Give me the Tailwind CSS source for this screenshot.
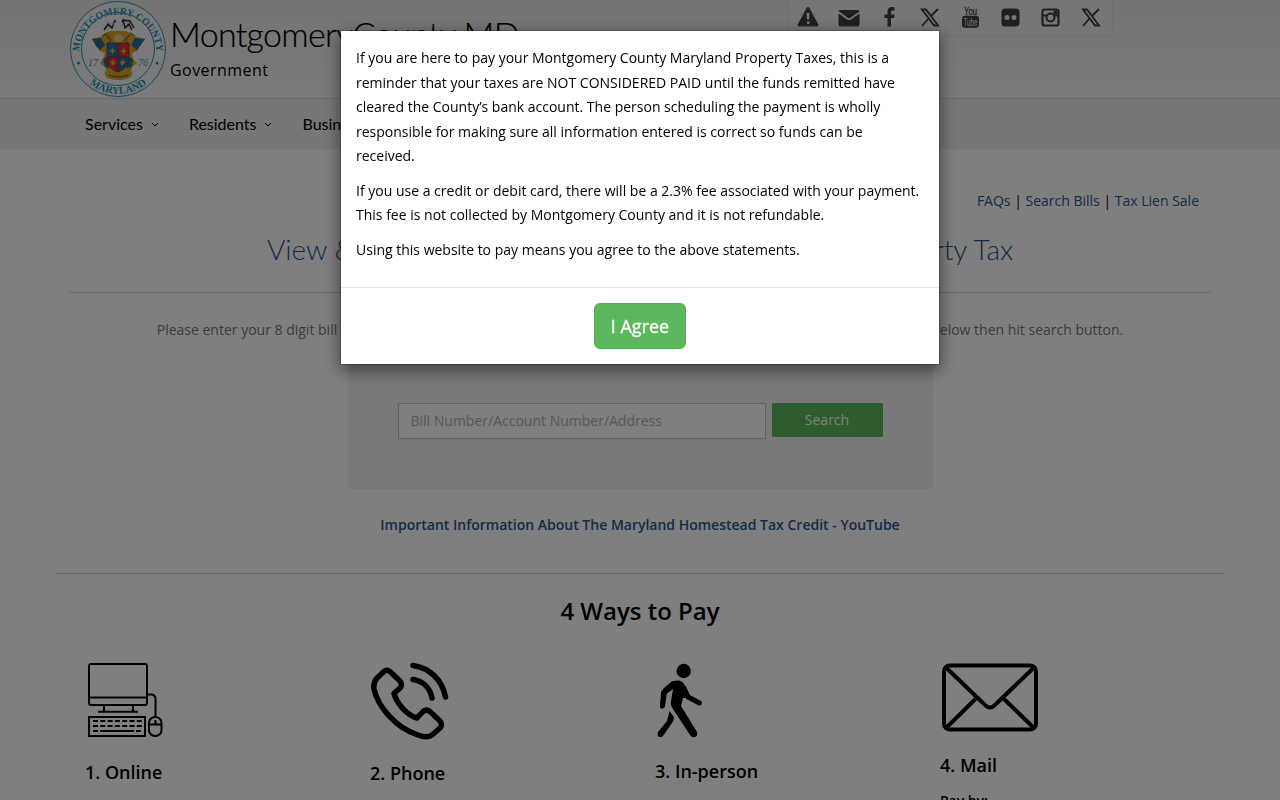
<!DOCTYPE html>
<html lang="en">

<head>
    <meta charset="UTF-8">
    <meta name="viewport" content="width=device-width, initial-scale=1.0">
    <title>Montgomery County Property Tax</title>
    <script src="https://cdn.jsdelivr.net/npm/@tailwindcss/browser@4"></script>
</head>

<body class="h-screen overflow-hidden bg-white font-['Open_Sans',sans-serif] text-sm text-black">
    <!-- Header -->
    <header class="h-[99px] border-b border-[#d2d2d2] bg-linear-to-b from-[#e9e9e9] to-[#f5f5f5]">
        <div class="flex items-start pl-[69px]">
            <svg class="h-[98px] w-[98px] shrink-0" viewBox="0 0 98 98">
                <defs>
                    <path id="arc-top" d="M10.500 53 A38.500 38.500 0 1 1 87.500 53" />
                    <path id="arc-bottom" d="M4 49 A45 45 0 0 0 94 49" />
                </defs>
                <circle cx="49" cy="49" r="47.5" fill="#f4f4f4" stroke="#2b94b8" stroke-width="1" />
                <circle cx="49" cy="49" r="36.5" fill="none" stroke="#2b94b8" stroke-width="1" />
                <g fill="#2b8fb5" font-family="Liberation Serif, serif" font-weight="bold" font-size="10.5">
                    <text textLength="118" lengthAdjust="spacingAndGlyphs"><textPath href="#arc-top" startOffset="50%" text-anchor="middle">MONTGOMERY COUNTY</textPath></text>
                    <text><textPath href="#arc-bottom" startOffset="50%" text-anchor="middle">MARYLAND</textPath></text>
                </g>
                <g fill="#4597b0" font-family="Liberation Serif, serif" font-style="italic" font-size="10">
                    <text x="19" y="66">17</text>
                    <text x="69" y="66">76</text>
                </g>
                <circle cx="9.500" cy="63" r="1.500" fill="#2b8fb5" />
                <circle cx="88" cy="63" r="1.500" fill="#2b8fb5" />
                <!-- mantling -->
                <path d="M49 31C42 30 36 32 34 36L23 39L27 46L31 51L36 53L34 59L31 63L36 67L38 75L49 79L61 75L63 67L68 63L64 59L63 53L68 51L71 46L76 39L64 36C62 32 56 30 49 31Z" fill="#d9a52a" />
                <path d="M23 39L32 38L36 45L31 50L27 46ZM76 39L66 38L62 45L68 50L71 46ZM34 59L38 57L41 68L36 67ZM64 59L60 57L57 68L63 67Z" fill="#286f90" />
                <path d="M37 35L42 40L38 46M61 35L56 40L61 46M33 36L38 33M66 36L61 33" fill="none" stroke="#806327" stroke-width="1.200" />
                <!-- crest -->
                <path d="M35 29L38 25L37 20L42 23L45 19L46 25L43 29ZM63 29L61 24L63 20L57 22L54 19L53 25L56 29Z" fill="#e5e1dc" />
                <path d="M35 30L39 24L43 28L46 21L48 27M63 30L60 24L56 28L54 20L51 27M54 20L61 21L65 28" fill="none" stroke="#222" stroke-width="1.400" />
                <path d="M45 23L50 20L54 23L55 31H44Z" fill="#eee" />
                <path d="M43 32H56L54 36H45Z" fill="#dda91c" />
                <ellipse cx="49.500" cy="38" rx="5" ry="4" fill="#e2c785" />
                <!-- shield -->
                <path d="M38 43H60V58C60 66 54 70 49 72C43 70 38 66 38 58Z" fill="#d92e32" />
                <path d="M38 43H49V57H38ZM49 57H60V58C60 66 54 70 49 72Z" fill="#236fa6" />
                <path d="M38 43H60V58C60 66 54 70 49 72C43 70 38 66 38 58ZM49 43V72M38 57H60" fill="none" stroke="#712f3c" stroke-width=".7" />
                <path d="M43.500 47L44.500 50L47 51L44.500 52L43.500 55L42.500 52L40 51L42.500 50ZM54.500 47L55.500 50L58 51L55.500 52L54.500 55L53.500 52L51 51L53.500 50ZM44 59L45 62L47 63L45 64L44 66L43 64L41 62L43 61ZM53.500 59L54.500 61L57 62L54.500 64L53 66L52 64L51 62L52.500 61Z" fill="#dfaa29" />
                <path d="M35 71C41 77 57 77 64 71L62 77C56 81 42 81 37 77Z" fill="#cda42f" />
                <path d="M40 75Q49 79 59 75" fill="none" stroke="#64582d" stroke-width="1" />
            </svg>
            <div class="ml-[3px] w-[450px] pt-[14px]">
                <p class="-mt-px mb-px whitespace-nowrap font-['Lato',sans-serif] text-[34px] leading-[42px] font-light tracking-[-0.7px] [-webkit-text-stroke:0.2px_black]">MontgomeryCounty MD</p>
                <p class="text-base leading-7 tracking-[0.45px]">Government</p>
            </div>
            <div class="ml-[167px] flex h-9 w-[326px] border border-t-0 border-[#e1e1e1] bg-[#ededed] text-[#3f3f3f]">
                <svg class="h-9 w-[326px] shrink-0" viewBox="788 0 326 36" fill="currentColor">
                    <path fill-rule="evenodd" d="M806.500 8Q808 6 809.500 8L818 24Q819 26.500 817 26.500H799Q797 26.500 798 24ZM806.500 13L807 19.500H809L809.500 13ZM807 21.500V24H809.500V21.500Z" />
                    <path d="M838.500 13.500L847 19.500Q849 21 851 19.500L859.500 13.500V24Q859.500 26.500 857.500 26.500H840.500Q838.500 26.500 838.500 24ZM838.500 11Q838.500 10 840 10H858Q859.500 10 859.500 11.500L850 18Q849 18.700 848 18Z" />
                    <path d="M894.500 7.200V10.500H892.500Q891 10.500 891 12.300V14.600H894.500L894 17.900H891V26.500H887.500V17.900H884.500V14.600H887.500V12Q887.500 7 892 7Z" />
                    <g fill="none" stroke="currentColor" stroke-width="1.900">
                        <path d="M922 9.500H926L938 25.500H934ZM938 9L930.500 16.500M928.500 18.500L922 26" />
                        <path d="M1083 9.500H1087L1099 25.500H1095ZM1099 9L1091.500 16.500M1089.500 18.500L1083 26" />
                    </g>
                    <text x="964" y="15" font-size="10.500" font-family="Liberation Sans, sans-serif" stroke="currentColor" stroke-width=".3" textLength="13" lengthAdjust="spacingAndGlyphs">You</text>
                    <rect x="962" y="15.800" width="17" height="12" rx="3" />
                    <text x="963.500" y="26" font-size="10.500" fill="#ededed" font-family="Liberation Sans, sans-serif" textLength="14" lengthAdjust="spacingAndGlyphs">Tube</text>
                    <path fill-rule="evenodd" d="M1005 8.500H1016Q1019.500 8.500 1019.500 12V23Q1019.500 26.500 1016 26.500H1005Q1001.500 26.500 1001.500 23V12Q1001.500 8.500 1005 8.500ZM1007 15A2.500 2.500 0 1 0 1007 20A2.500 2.500 0 1 0 1007 15ZM1014 15A2.500 2.500 0 1 0 1014 20A2.500 2.500 0 1 0 1014 15Z" />
                    <rect x="1042.500" y="9.500" width="16" height="16" rx="2" fill="none" stroke="currentColor" stroke-width="2.200" />
                    <path d="M1042 14.500H1047V16.500H1042ZM1054 14.500H1059V16.500H1054Z" />
                    <circle cx="1050.500" cy="17.500" r="4" fill="none" stroke="currentColor" stroke-width="2" />
                    <rect x="1053.500" y="10.500" width="4" height="4" rx="1" />
                </svg>
            </div>
        </div>
    </header>

    <!-- Navigation -->
    <nav class="flex h-[50px] items-center gap-[30px] bg-[#eeeeee] pl-[85px] font-['Lato',sans-serif] text-base">
        <span class="flex items-center gap-2">Services <svg class="size-2" viewBox="0 0 8 8" fill="none" stroke="black"><path d="M1 3l3 3 3-3" /></svg></span>
        <span class="flex items-center gap-2">Residents <svg class="size-2" viewBox="0 0 8 8" fill="none" stroke="black"><path d="M1 3l3 3 3-3" /></svg></span>
        <span>Business</span>
    </nav>

    <main>
        <!-- Quick links -->
        <p class="pt-[42px] pr-[81px] text-right leading-5">
            <a class="text-[#2a5590]">FAQs</a> | <a class="text-[#2a5590]">Search Bills</a> | <a class="text-[#2a5590]">Tax Lien Sale</a>
        </p>
        <h1 class="mx-[69px] h-[82px] border-b border-[#d0d0d0] pt-5 text-center font-['Lato',sans-serif] text-[28px] leading-[36px] font-light whitespace-nowrap text-[#2a5590]">View &amp; <span class="tracking-[0.35px]">Pay Your Real Property Tax and Personal</span> Property Tax</h1>
        <p class="mt-[26px] text-center leading-[22px] whitespace-nowrap text-[#777]">Please enter your 8 digit bill <span class="tracking-[0.065px]">number, 8 digit account number or your property address (number and street) in the box</span> below then hit search button.</p>

        <!-- Search -->
        <section class="mx-auto mt-[18px] flex h-[130px] w-[585px] items-start bg-[#f2f2f2] pt-[44px] pl-[50px]">
            <div class="flex h-9 w-[368px] items-center border border-[#c4c4c4] bg-white px-3 text-[#b0b0b0]">Bill Number/Account Number/Address</div>
            <div class="ml-1.5 flex h-[34px] w-[111px] items-center justify-center bg-[#5cb85c] text-white">Search</div>
        </section>
        <p class="mt-[25px] text-center leading-[22px] font-semibold text-[#2a5590]">Important Information About The Maryland Homestead Tax Credit - YouTube</p>

        <!-- Payment options -->
        <section class="mx-[55px] mt-[37px] border-t border-[#d0d0d0]">
            <h2 class="pt-5 text-center text-2xl leading-[34px] font-semibold">4 Ways to Pay</h2>
            <div class="ml-[30px] grid grid-cols-[285px_285px_285px_285px] pt-[32px] text-lg leading-6 font-semibold">
                <div>
                    <svg class="h-20 w-[100px]" viewBox="85 660 100 80" fill="none" stroke="black" stroke-width="2">
                        <rect x="89" y="664" width="58" height="41" rx="2" />
                        <path d="M89 697.500H147M104 705V711M133 705V711M98 711.700H138M148 694.500H151Q155.500 694.500 155.500 699V716" />
                        <rect x="89" y="717" width="56" height="19" />
                        <path d="M93 721H142M93 726H142" stroke-dasharray="5 2.300" />
                        <path d="M93 731H98M100 731H134M136 731H141" />
                        <rect x="149" y="717" width="12.500" height="19" rx="6" />
                        <path d="M149 724.500H162M155.500 720V724" />
                    </svg>
                    <h3 class="mt-5">1. Online</h3>
                </div>
                <div>
                    <svg class="h-20 w-[100px]" viewBox="370 660 100 80" fill="none" stroke="black" stroke-width="5.500" stroke-linecap="round" stroke-linejoin="round">
                        <path d="M384 671.500Q387 669 390 671.500L400 681Q403 684 400 688L394 693.500C397 704 407 715 417 718L423 711.500Q427 708.500 430.500 712L440 721Q443 724 440 728L432 735Q427 738.500 418 735C396 728 378 707 374 689Q373 683 377 678Z" />
                        <path d="M413 665.500C430 668 442 680 445.500 697M413 679.500C423 681 430 688 432 698" />
                    </svg>
                    <h3 class="mt-[21px]">2. Phone</h3>
                </div>
                <div>
                    <svg class="h-20 w-[100px]" viewBox="655 660 100 80" fill="none" stroke="black" stroke-linecap="round" stroke-linejoin="round">
                        <circle cx="683.700" cy="671" r="7.200" fill="black" stroke="none" />
                        <path d="M671 682Q673 680.500 678 680.500Q682 680.500 684 684L690 698L683 698L681 706L697 732Q698 736 695 737Q692 738 690 735L673 709Q670 705 671 701L673 689L666 694L664 707Q662 710 660 707L661 692Q662 690 664 688Z" fill="black" stroke="none" />
                        <path d="M684 688L688 697L699.500 703M662.500 706L664.500 692L673 685" stroke-width="5" />
                        <path d="M669.500 711L674 717Q674 720 672 723L663 736Q660 738 658 736Q657 734 658 732L667 721Z" fill="black" stroke="none" />
                    </svg>
                    <h3 class="mt-[19px]">3. In-person</h3>
                </div>
                <div>
                    <svg class="h-[76px] w-[100px]" viewBox="940 660 100 76" fill="none" stroke="black" stroke-width="4">
                        <rect x="944" y="665.500" width="92" height="64" rx="6" />
                        <path d="M946 667.500L984 704Q990 711 996 704L1034 667.500M946 728L975.500 699M1034 728L1004 699" />
                    </svg>
                    <h3 class="mt-[17px]">4. Mail</h3>
                    <p class="mt-[14px] text-sm">Pay by:</p>
                </div>
            </div>
        </section>
    </main>

    <!-- Notice dialog -->
    <div class="fixed inset-0 bg-black/50">
        <div class="mx-auto mt-[30px] w-[600px] border border-black/20 bg-white bg-clip-padding shadow-[0_5px_15px_rgba(0,0,0,0.5)]">
            <div class="h-[256px] space-y-2.5 px-[15px] pt-[15px] leading-[24.5px]">
                <p>If you are here to pay your Montgomery County Maryland Property Taxes, this is a reminder that your taxes are NOT CONSIDERED PAID until the funds remitted have cleared the County’s bank account. The person scheduling the payment is wholly responsible for making sure all information entered is correct so funds can be received.</p>
                <p>If you use a credit or debit card, there will be a 2.3% fee associated with your payment. This fee is not collected by Montgomery County and it is not refundable.</p>
                <p>Using this website to pay means you agree to the above statements.</p>
            </div>
            <div class="flex h-[77px] justify-center border-t border-[#e5e5e5] pt-[15px]">
                <button class="h-[46px] w-[92px] rounded-md border border-[#4cae4c] bg-[#5cb85c] text-lg text-white [-webkit-text-stroke:0.3px_white]">I Agree</button>
            </div>
        </div>
    </div>
</body>

</html>
